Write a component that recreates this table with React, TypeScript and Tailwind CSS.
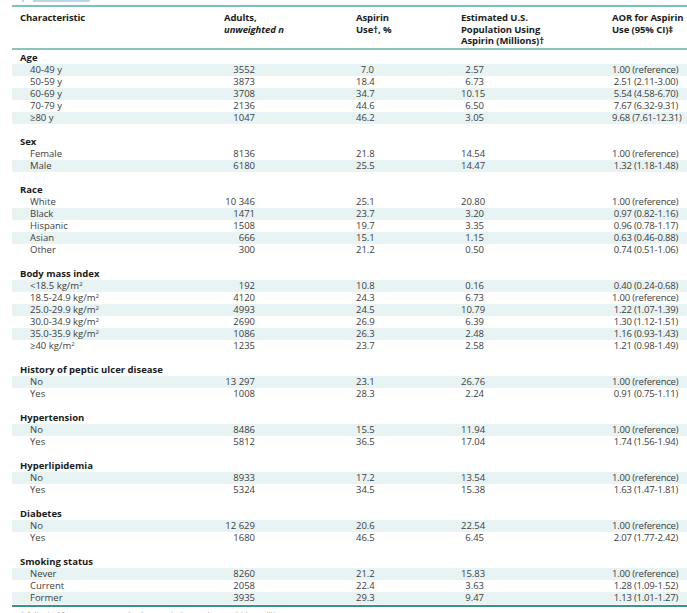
// App.tsx
type Row = [string, string, string, string, string];

const groups: { label: string; rows: Row[] }[] = [
  {
    label: "Age",
    rows: [
      ["40-49 y", "3552", "7.0", "2.57", "1.00 (reference)"],
      ["50-59 y", "3873", "18.4", "6.73", "2.51 (2.11-3.00)"],
      ["60-69 y", "3708", "34.7", "10.15", "5.54 (4.58-6.70)"],
      ["70-79 y", "2136", "44.6", "6.50", "7.67 (6.32-9.31)"],
      ["≥80 y", "1047", "46.2", "3.05", "9.68 (7.61-12.31)"],
    ],
  },
  {
    label: "Sex",
    rows: [
      ["Female", "8136", "21.8", "14.54", "1.00 (reference)"],
      ["Male", "6180", "25.5", "14.47", "1.32 (1.18-1.48)"],
    ],
  },
  {
    label: "Race",
    rows: [
      ["White", "10 346", "25.1", "20.80", "1.00 (reference)"],
      ["Black", "1471", "23.7", "3.20", "0.97 (0.82-1.16)"],
      ["Hispanic", "1508", "19.7", "3.35", "0.96 (0.78-1.17)"],
      ["Asian", "666", "15.1", "1.15", "0.63 (0.46-0.88)"],
      ["Other", "300", "21.2", "0.50", "0.74 (0.51-1.06)"],
    ],
  },
  {
    label: "Body mass index",
    rows: [
      ["<18.5 kg/m", "192", "10.8", "0.16", "0.40 (0.24-0.68)"],
      ["18.5-24.9 kg/m", "4120", "24.3", "6.73", "1.00 (reference)"],
      ["25.0-29.9 kg/m", "4993", "24.5", "10.79", "1.22 (1.07-1.39)"],
      ["30.0-34.9 kg/m", "2690", "26.9", "6.39", "1.30 (1.12-1.51)"],
      ["35.0-35.9 kg/m", "1086", "26.3", "2.48", "1.16 (0.93-1.43)"],
      ["≥40 kg/m", "1235", "23.7", "2.58", "1.21 (0.98-1.49)"],
    ],
  },
  {
    label: "History of peptic ulcer disease",
    rows: [
      ["No", "13 297", "23.1", "26.76", "1.00 (reference)"],
      ["Yes", "1008", "28.3", "2.24", "0.91 (0.75-1.11)"],
    ],
  },
  {
    label: "Hypertension",
    rows: [
      ["No", "8486", "15.5", "11.94", "1.00 (reference)"],
      ["Yes", "5812", "36.5", "17.04", "1.74 (1.56-1.94)"],
    ],
  },
  {
    label: "Hyperlipidemia",
    rows: [
      ["No", "8933", "17.2", "13.54", "1.00 (reference)"],
      ["Yes", "5324", "34.5", "15.38", "1.63 (1.47-1.81)"],
    ],
  },
  {
    label: "Diabetes",
    rows: [
      ["No", "12 629", "20.6", "22.54", "1.00 (reference)"],
      ["Yes", "1680", "46.5", "6.45", "2.07 (1.77-2.42)"],
    ],
  },
  {
    label: "Smoking status",
    rows: [
      ["Never", "8260", "21.2", "15.83", "1.00 (reference)"],
      ["Current", "2058", "22.4", "3.63", "1.28 (1.09-1.52)"],
      ["Former", "3935", "29.3", "9.47", "1.13 (1.01-1.27)"],
    ],
  },
];

const cols = "grid grid-cols-[212px_132px_105px_151px_75px]";

export default function App() {
  let n = 0;

  return (
    <div
      className="w-[687px] h-[613px] overflow-hidden bg-white text-[#404040] text-[9.5px]"
      style={{ fontFamily: "'Open Sans', 'Noto Sans', sans-serif" }}
    >
      {/* cut-off tab above the table */}
      <div className="flex h-[2px]">
        <div className="ml-[22px] w-[2px] bg-[#c9d3d8]" />
        <div className="ml-[9px] w-[57px] bg-[#b7d8e8]" />
      </div>

      <div className="ml-[12px] mt-[3px]">
        <div className="h-[2px] bg-[#7cc1bd]" />

        {/* Header */}
        <div className={`${cols} h-[41px] pt-[5px] font-bold text-[#1c1c1c] leading-[11.5px] tracking-[-0.1px]`}>
          <div className="pl-[8px]">Characteristic</div>
          <div>
            Adults,
            <br />
            <span className="italic">unweighted n</span>
          </div>
          <div>
            Aspirin
            <br />
            Use†, %
          </div>
          <div>
            Estimated U.S.
            <br />
            Population Using
            <br />
            Aspirin (Millions)†
          </div>
          <div>
            AOR for Aspirin
            <br />
            Use (95% CI)‡
          </div>
        </div>
        <div className="h-[2px] bg-[#8cc3c0]" />

        {/* Body */}
        <div className="pt-[2px] leading-[12px]">
          {groups.map((g, gi) => (
            <div key={g.label}>
              {gi > 0 && <div className="h-[12px]" />}
              <div className="h-[12px] pl-[8px] font-bold text-[#1a1a1a]">{g.label}</div>
              {g.rows.map((r) => {
                const shaded = n++ % 2 === 0;
                const kg = r[0].endsWith("kg/m");
                return (
                  <div
                    key={r[0]}
                    className={`${cols} h-[12px] ${shaded ? "bg-[#e8f3f4]" : ""}`}
                  >
                    <div className="pl-[18px] whitespace-nowrap">
                      {r[0]}
                      {kg && <span className="text-[6px] leading-none align-[3px]">2</span>}
                    </div>
                    <div className="w-[31px] text-right whitespace-nowrap">{r[1]}</div>
                    <div className="w-[18px] text-right">{r[2]}</div>
                    <div className="w-[23px] text-right">{r[3]}</div>
                    <div className="w-[66px] text-right whitespace-nowrap tracking-[-0.2px]">{r[4]}</div>
                  </div>
                );
              })}
            </div>
          ))}
        </div>

        <div className="mt-[1px] h-[2px] bg-[#3f918d]" />
        <div className="pt-[2px] pl-[8px] text-[8px] leading-[10px] text-[#8a8a8a]">
          * Adjusted for age, sex, race, body mass index, and comorbid conditions.
        </div>
      </div>
    </div>
  );
}
